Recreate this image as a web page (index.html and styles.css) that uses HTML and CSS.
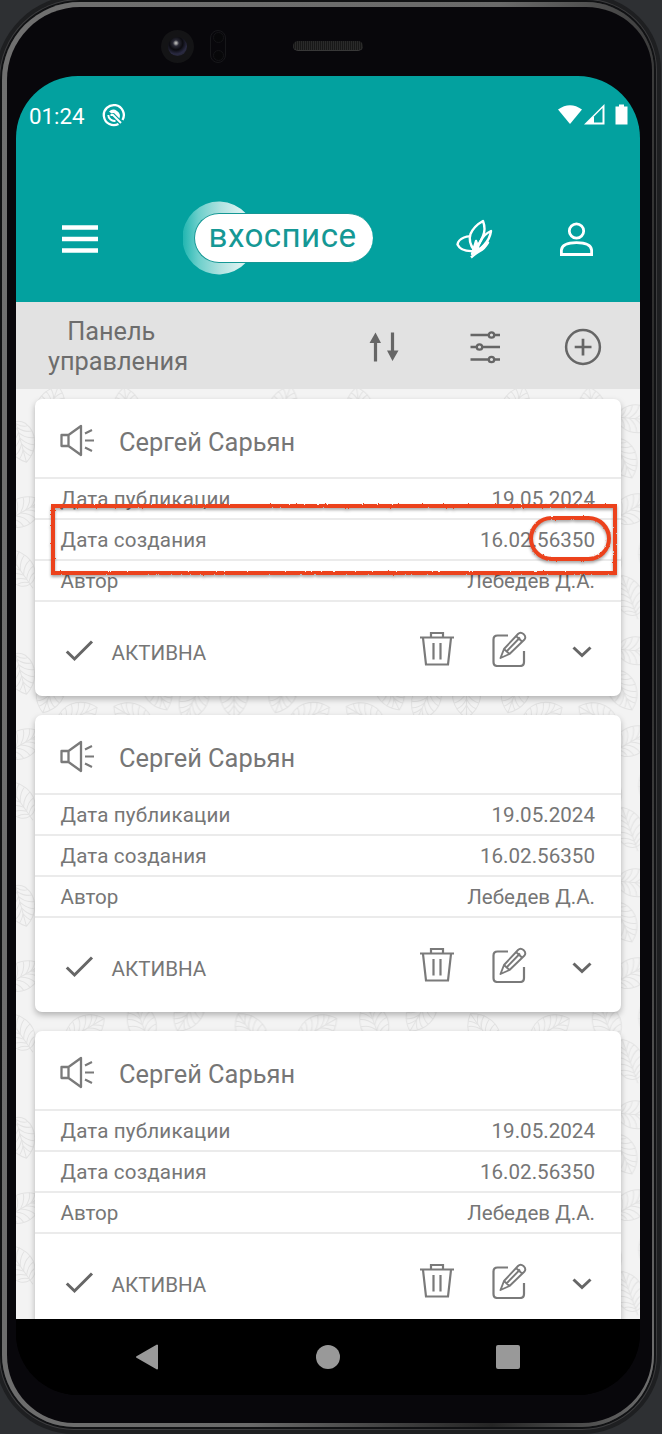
FILE: index.html
```html
<!DOCTYPE html>
<html lang="ru">
<head>
<meta charset="utf-8">
<title>Панель управления</title>
<link rel="stylesheet" href="styles.css">
</head>
<body>
<svg class="defs" width="0" height="0" aria-hidden="true">
  <defs>
    <g id="leaf" fill="none" stroke="#e2e2e2" stroke-width="1">
      <path d="M0 -21C13 -13 19 4 9 17Q5 21 0 21Q-5 21 -9 17C-19 4 -13 -13 0 -21ZM0 -21V26"/>
      <path d="M0 -8Q3 -14 6 -16M0 -2Q4 -10 10 -12M0 4Q5 -4 12 -6M0 10Q5 2 14 1M0 15Q6 8 13 8M0 19Q5 14 10 14M0 -8Q-3 -14 -6 -16M0 -2Q-4 -10 -10 -12M0 4Q-5 -4 -12 -6M0 10Q-5 2 -14 1M0 15Q-6 8 -13 8M0 19Q-5 14 -10 14"/>
    </g>
    <pattern id="leaves" width="232.5" height="232" patternUnits="userSpaceOnUse">
      <use href="#leaf" transform="translate(35 17) rotate(20)"/>
      <use href="#leaf" transform="translate(111 19) rotate(-8)"/>
      <use href="#leaf" transform="translate(34 72) rotate(200)"/>
      <use href="#leaf" transform="translate(71 91) rotate(65) translate(0 10)"/>
      <use href="#leaf" transform="translate(116 96) rotate(-60)"/>
      <use href="#leaf" transform="translate(142 70) rotate(155)"/>
      <use href="#leaf" transform="translate(177 80) rotate(205)"/>
      <use href="#leaf" transform="translate(218 76) rotate(180)"/>
      <use href="#leaf" transform="translate(5 53) rotate(165)"/>
      <use href="#leaf" transform="translate(237 53) rotate(165)"/>
      <use href="#leaf" transform="translate(8 122) rotate(60)"/>
      <use href="#leaf" transform="translate(240 122) rotate(60)"/>
      <use href="#leaf" transform="translate(2 178) rotate(-35)"/>
      <use href="#leaf" transform="translate(234 178) rotate(-35)"/>
      <use href="#leaf" transform="translate(70 176) rotate(60)"/>
      <use href="#leaf" transform="translate(125 168) rotate(-20)"/>
      <use href="#leaf" transform="translate(158 30) rotate(95)"/>
      <use href="#leaf" transform="translate(153 119) rotate(60)"/>
      <use href="#leaf" transform="translate(172 160) rotate(210)"/>
      <use href="#leaf" transform="translate(148 206) rotate(-20)"/>
    </pattern>
    <linearGradient id="crescent" x1="0" x2="1">
      <stop offset="0" stop-color="#1fb5b0"/><stop offset=".25" stop-color="#6ccfcb"/><stop offset=".6" stop-color="#b0e2e0"/><stop offset=".9" stop-color="#d8f1f0"/>
    </linearGradient>
    <filter id="rough" filterUnits="userSpaceOnUse" x="0" y="0" width="590" height="100">
      <feTurbulence type="fractalNoise" baseFrequency=".6" numOctaves="2" seed="4"/>
      <feDisplacementMap in="SourceGraphic" scale="2.2" xChannelSelector="R" yChannelSelector="G"/>
    </filter>
    <symbol id="speaker" viewBox="0 0 36 34">
      <g fill="none" stroke="#7a7a7a" stroke-width="2.300"><path d="M2.500 11h7v11H2.500zM9.500 11L22 2V31L9.500 22" stroke-linejoin="round"/><path d="M26 9.500l7-3.500M26 16.500h9M26 23.500l7 3.500" stroke-width="2.100"/></g>
    </symbol>
    <symbol id="trash" viewBox="0 0 36 36">
      <path d="M1 6.500H35M12 6V2H24V6M4 7L7 33.500H29L32 7M14.500 12V28.500M21.500 12V28.500" fill="none" stroke="#7a7a7a" stroke-width="2.200"/>
    </symbol>
    <symbol id="edit" viewBox="0 0 36 36">
      <g fill="none" stroke="#7a7a7a" stroke-width="2.200"><path d="M17 4.500H6.500Q2.500 4.500 2.500 8.500V31Q2.500 35 6.500 35H29Q33 35 33 31V20"/><path d="M9.500 27L13 18L27 3Q29.500 .5 32.500 3Q35.500 5.500 33.500 8.500L18.500 23ZM13 18L18.500 23M25 5L31 10.500M15.500 20.500L29 6.500" stroke-width="1.900" stroke-linejoin="round"/></g>
    </symbol>
  </defs>
</svg>
<div class="device">
  <div class="bezel">
    <div class="hardware">
      <div class="camera"><i></i></div>
      <div class="sensor"><i></i><i></i></div>
      <div class="earpiece"></div>
    </div>
    <div class="screen">
      <header class="header">
        <div class="status">
          <span class="clock">01:24</span>
          <svg class="privacy" width="24" height="24" viewBox="0 0 24 24"><path d="M20.500 17A10 10 0 1 0 16.500 20.900" fill="none" stroke="#fff" stroke-width="2.300"/><path d="M7 8.500A6.500 6.500 0 0 1 17.500 15.500L12 10 9.500 10.500Z" fill="#fff"/><path d="M6.300 12A6 6 0 0 0 13.500 17.800M8.500 12L11 12L19 20" fill="none" stroke="#fff" stroke-width="2"/></svg>
          <svg class="signals" width="72" height="22" viewBox="0 0 72 22"><path d="M0 5.500Q12 -3 24 5.500L12 20Z" fill="#fff"/><path d="M26 20.500L46.500 0V20.500Z" fill="#fff"/><path d="M36 12.500L44.500 4V18.500H36Z" fill="#03a19f"/><path d="M57.500 2.500H61V.5H66V2.500H69.500V20.500H57.500Z" fill="#fff"/></svg>
        </div>
        <div class="appbar">
          <svg class="menu" width="36" height="28" viewBox="0 0 36 28"><path d="M0 2.500H36M0 14H36M0 25.500H36" stroke="#fff" stroke-width="4.600"/></svg>
          <div class="logo">
            <svg width="66" height="74" viewBox="0 0 66 74"><path d="M63 12.500A36.500 36.500 0 1 0 63 61.500Z" fill="url(#crescent)"/></svg>
            <span class="brand">вхосписе</span>
          </div>
          <svg class="butterfly" width="38" height="40" viewBox="0 0 38 40"><g fill="none" stroke="#fff" stroke-width="2.400" stroke-linejoin="round"><path d="M15 38.500Q20 34 24 32T32 23.500L23 31"/><path d="M18 31Q12 23 14.500 15Q18 7 27 2Q30 10 27 17Q24 25 18 31Z"/><path d="M18 32Q5 33 1.500 25.500Q2 21 8 18.500Q12 17 14 17.500M20 32L24 23Q28 15 35 12Q34 20 28 26L20 34"/><path d="M16 35L20 22L23 31Z" fill="#fff"/></g></svg>
          <svg class="person" width="33" height="34" viewBox="0 0 33 34"><g fill="none" stroke="#fff" stroke-width="2.800"><circle cx="16.500" cy="9" r="7.200"/><path d="M1.400 32.500V28C2 23 8 20.600 16.500 20.600S31 23 31.600 28V32.500Z"/></g></svg>
        </div>
      </header>
      <div class="toolbar">
        <h1>Панель &nbsp;<br>управления</h1>
        <svg class="sort" width="30" height="30" viewBox="0 0 30 30"><path d="M6.500 29.500V8M23.500 .5V20" stroke="#666" stroke-width="3.200"/><path d="M0.500 11L6.500 .5 12 11ZM18 18.500H29.500L23.500 29Z" fill="#666"/></svg>
        <svg class="filter" width="30" height="34" viewBox="0 0 30 34"><path d="M.5 5H30M.5 17H30M.5 29.500H30" stroke="#666" stroke-width="2.400"/><g fill="#e2e2e2" stroke="#666" stroke-width="2.300"><circle cx="21.500" cy="5" r="2.700"/><circle cx="9.500" cy="17" r="2.700"/><circle cx="21.500" cy="29.500" r="2.700"/></g></svg>
        <svg class="add" width="38" height="38" viewBox="0 0 38 38"><circle cx="19" cy="19" r="16.900" fill="none" stroke="#666" stroke-width="2.500"/><path d="M10.700 19H27.500M19 10.700V27.500" stroke="#666" stroke-width="2.700"/></svg>
      </div>
      <main class="content">
        <svg class="backdrop" width="624" height="929"><rect width="624" height="929" fill="url(#leaves)"/></svg>
        <section class="card">
          <div class="head"><svg width="36" height="34"><use href="#speaker"/></svg><h2>Сергей Сарьян</h2></div>
          <div class="row"><span class="label">Дата публикации</span><span>19.05.2024</span></div>
          <div class="row"><span class="label">Дата создания</span><span>16.02.56350</span></div>
          <div class="row"><span>Автор</span><span>Лебедев Д.А.</span></div>
          <div class="foot">
            <svg class="check" width="30" height="24" viewBox="0 0 30 24"><path d="M1.800 12.500L9.500 20L27 2.500" fill="none" stroke="#666" stroke-width="3"/></svg>
            <span class="state">АКТИВНА</span>
            <svg class="trash" width="36" height="36"><use href="#trash"/></svg>
            <svg class="edit" width="36" height="36"><use href="#edit"/></svg>
            <svg class="chevron" width="20" height="14" viewBox="0 0 20 14"><path d="M1.500 2.500L10 10.500L18.500 2.500" fill="none" stroke="#666" stroke-width="3"/></svg>
          </div>
          <svg class="marker" width="590" height="100" viewBox="0 0 590 100"><g filter="url(#rough)" fill="none" stroke="#ec431f" stroke-width="4"><rect x="18" y="15" width="562" height="67"/><rect x="496" y="27" width="78" height="41" rx="20.500"/></g></svg>
        </section>
        <section class="card">
          <div class="head"><svg width="36" height="34"><use href="#speaker"/></svg><h2>Сергей Сарьян</h2></div>
          <div class="row"><span class="label">Дата публикации</span><span>19.05.2024</span></div>
          <div class="row"><span class="label">Дата создания</span><span>16.02.56350</span></div>
          <div class="row"><span>Автор</span><span>Лебедев Д.А.</span></div>
          <div class="foot">
            <svg class="check" width="30" height="24" viewBox="0 0 30 24"><path d="M1.800 12.500L9.500 20L27 2.500" fill="none" stroke="#666" stroke-width="3"/></svg>
            <span class="state">АКТИВНА</span>
            <svg class="trash" width="36" height="36"><use href="#trash"/></svg>
            <svg class="edit" width="36" height="36"><use href="#edit"/></svg>
            <svg class="chevron" width="20" height="14" viewBox="0 0 20 14"><path d="M1.500 2.500L10 10.500L18.500 2.500" fill="none" stroke="#666" stroke-width="3"/></svg>
          </div>
        </section>
        <section class="card">
          <div class="head"><svg width="36" height="34"><use href="#speaker"/></svg><h2>Сергей Сарьян</h2></div>
          <div class="row"><span class="label">Дата публикации</span><span>19.05.2024</span></div>
          <div class="row"><span class="label">Дата создания</span><span>16.02.56350</span></div>
          <div class="row"><span>Автор</span><span>Лебедев Д.А.</span></div>
          <div class="foot">
            <svg class="check" width="30" height="24" viewBox="0 0 30 24"><path d="M1.800 12.500L9.500 20L27 2.500" fill="none" stroke="#666" stroke-width="3"/></svg>
            <span class="state">АКТИВНА</span>
            <svg class="trash" width="36" height="36"><use href="#trash"/></svg>
            <svg class="edit" width="36" height="36"><use href="#edit"/></svg>
            <svg class="chevron" width="20" height="14" viewBox="0 0 20 14"><path d="M1.500 2.500L10 10.500L18.500 2.500" fill="none" stroke="#666" stroke-width="3"/></svg>
          </div>
        </section>
      </main>
      <nav class="navbar">
        <svg width="24" height="26" viewBox="0 0 24 26"><path d="M2 13L22 1.500V24.500Z" fill="#999" stroke="#999" stroke-width="2" stroke-linejoin="round"/></svg>
        <span class="home"></span>
        <span class="recent"></span>
      </nav>
    </div>
  </div>
</div>
</body>
</html>
```
FILE: styles.css
```css
* { box-sizing: border-box; }
body { margin: 0; background: #2e3033; font-family: Roboto, sans-serif; color: #767676; }
svg { display: block; flex: none; }
.defs { position: absolute; }
h1, h2 { margin: 0; font-weight: 400; }

.device { width: 662px; height: 1434px; padding: 2px 8px 7px 2px; overflow: hidden; }
.bezel {
  width: 652px; height: 1425px;
  border: solid transparent;
  border-width: 5px 2px 4px 5px;
  border-radius: 78px 68px 72px 72px;
  background:
    linear-gradient(#08070b, #08070b) padding-box,
    linear-gradient(100deg, #707070 0%, #6a6a6a 55%, #252525 82%, #5c5c5c 96%, #777 100%) border-box;
  padding: 0 12px 0 9px;
  box-shadow: 0 0 0 2px #111214, 0 0 0 3px #3c3c3e, 0 0 0 7px #1e1f21;
}
.hardware { height: 69px; display: flex; align-items: center; padding: 9px 0 0 145px; }
.camera { width: 33px; height: 33px; border-radius: 50%; background: #141416; display: grid; place-items: center; }
.camera i { width: 19px; height: 19px; border-radius: 50%; background: radial-gradient(circle at 42% 32%, #aaa 0 5%, #282834 18%, #0b0b10 40%, #2a2a42 65%, #202028 90%); }
.sensor { width: 16px; height: 33px; margin-left: 16px; border: 1px solid #17171a; border-radius: 8px; display: flex; flex-direction: column; justify-content: space-between; align-items: center; padding: 1px; }
.sensor i { width: 11px; height: 11px; border-radius: 50%; border: 1px solid #141417; background: #070709; }
.earpiece { width: 70px; height: 10px; margin-left: 67px; border-radius: 5px; border-bottom: 1px solid #383838; background: repeating-linear-gradient(90deg, #2a2a2a 0 1px, #181818 1px 2px); }

.screen { width: 624px; height: 1319px; border-radius: 62px; overflow: hidden; background: #000; display: flex; flex-direction: column; }
.header { height: 226px; flex: none; background: #03a19f; color: #fff; }
.status { height: 78px; display: flex; align-items: center; padding: 0 10px 0 13px; }
.clock { font-size: 22.3px; line-height: 26px; width: 73px; padding-top: 1px; }
.signals { margin-left: auto; }
.appbar { height: 148px; display: flex; align-items: center; padding: 22px 46px 0; }
.menu { margin-top: -1px; }
.logo { width: 190px; margin-left: 85px; display: flex; align-items: center; }
.logo svg { margin-right: -55px; margin-top: -2px; }
.brand { width: 179px; height: 50px; margin-top: -2px; border: 1.500px solid #159895; border-right: 0; border-radius: 25px; background: #fff; color: #159895; font-size: 33.200px; line-height: 44px; text-align: center; position: relative; padding-right: 3px; letter-spacing: .4px; }
.butterfly { margin-left: 83px; }
.person { margin-left: 66px; margin-top: -1px; }

.toolbar { height: 87px; flex: none; background: #e2e2e2; display: flex; align-items: center; padding: 2px 18px 0 32px; }
.toolbar h1 { width: 139px; font-size: 25.300px; line-height: 30px; padding-top: 1px; text-align: center; color: #6d6d6d; white-space: nowrap; }
.sort { margin-left: 182px; }
.filter { margin-left: 71px; }
.add { margin-left: 64px; }

.content { flex: 1; min-height: 0; background: #f3f3f3; overflow: hidden; position: relative; padding: 10px 19px 0; display: flex; flex-direction: column; gap: 19px; }
.backdrop { position: absolute; left: 0; top: 0; }
.card { position: relative; flex: none; height: 297px; background: #fff; border-radius: 7px; box-shadow: 0 3px 6px rgba(0, 0, 0, .27); }
.head { height: 80px; border-bottom: 2px solid #ebebeb; display: flex; align-items: center; padding: 5px 0 0 24px; }
.head h2 { margin-left: 24px; font-size: 25.400px; line-height: 30px; padding-top: 2px; white-space: nowrap; }
.row { height: 41px; border-bottom: 2px solid #ebebeb; display: flex; align-items: center; justify-content: space-between; padding: 0 26px 0 25.500px; font-size: 20.600px; white-space: nowrap; }
.label { letter-spacing: .15px; }
.foot { height: 94px; display: flex; align-items: center; padding: 1px 28px 0 30px; }
.check { margin-top: 3px; }
.state { font-size: 20.600px; line-height: 26px; width: 96px; margin-left: 16.500px; padding-top: 6px; white-space: nowrap; }
.trash { margin-left: 211px; margin-top: -1px; }
.edit { margin-left: 36px; margin-top: -1px; }
.chevron { margin-left: 45.500px; margin-top: 4px; }
.marker { position: absolute; left: 0; top: 92px; filter: drop-shadow(0 2px 1.500px rgba(0, 0, 0, .35)); }

.navbar { height: 76px; flex: none; background: #000; display: flex; align-items: center; padding-left: 119px; }
.home { width: 24px; height: 24px; border-radius: 50%; background: #999; margin-left: 157px; }
.recent { width: 24px; height: 24px; border-radius: 2px; background: #999; margin-left: 155.500px; }
```
